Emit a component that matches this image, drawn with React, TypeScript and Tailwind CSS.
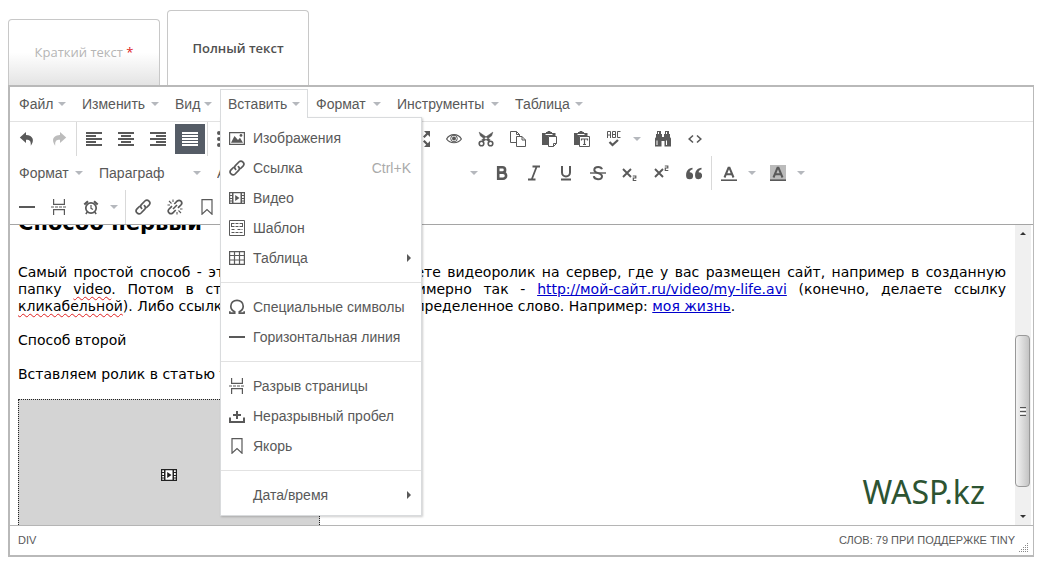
import type { ReactNode } from 'react'

type IconName = keyof typeof icons

const icons = {
  undo: (
    <path d="M7 1 .8 6.500 7 12V8.800c3.600-.2 5.100 1.100 4.800 6 4-5.400 2.400-10.400-4.800-10.800z" fill="currentColor" />
  ),
  redo: (
    <path d="M9 1 15.200 6.500 9 12V8.800c-3.600-.2-5.100 1.100-4.800 6C.2 9.400 1.800 4.400 9 4z" fill="currentColor" />
  ),
  alignLeft: <path d="M0 2h16M0 5h10M0 8h16M0 11h10M0 14h16" strokeWidth="2" />,
  alignCenter: <path d="M0 2h16M3 5h10M0 8h16M3 11h10M0 14h16" strokeWidth="2" />,
  alignRight: <path d="M0 2h16M6 5h10M0 8h16M6 11h10M0 14h16" strokeWidth="2" />,
  alignJustify: <path d="M0 2h16M0 5h16M0 8h16M0 11h16M0 14h16" strokeWidth="2" />,
  bullets: (
    <g fill="currentColor" stroke="none">
      <circle cx="2" cy="2" r="2" />
      <circle cx="2" cy="8" r="2" />
      <circle cx="2" cy="14" r="2" />
      <path d="M6 1h10v2H6zM6 7h10v2H6zM6 13h10v2H6z" />
    </g>
  ),
  fullscreen: (
    <path
      d="M10 0h6v6l-2.200-2.200L10.600 7 9 5.400l3.200-3.200zM6 16H0v-6l2.200 2.200L5.400 9 7 10.600l-3.200 3.200zM16 10v6h-6l2.200-2.200L9 10.600 10.600 9l3.200 3.200zM0 6V0h6L3.800 2.200 7 5.400 5.400 7 2.200 3.800z"
      fill="currentColor"
    />
  ),
  eye: (
    <g>
      <path d="M.6 8C4 2.200 12 2.200 15.400 8 12 13 4 13 .6 8z" strokeWidth="1.200" />
      <circle cx="8" cy="7.500" r="3.300" strokeWidth="1" />
      <circle cx="8" cy="7.500" r="2" fill="currentColor" stroke="none" />
    </g>
  ),
  cut: (
    <g>
      <path d="M1.200 1.200 2.500 5l8.200 5.500 1.500-1.800zM14.800 1.200 13.500 5l-8.200 5.500-1.500-1.800z" fill="currentColor" strokeWidth=".6" />
      <circle cx="3.500" cy="12.500" r="2.300" strokeWidth="1.600" />
      <circle cx="12.500" cy="12.500" r="2.300" strokeWidth="1.600" />
    </g>
  ),
  copy: (
    <g strokeWidth="1">
      <path d="M6.500 11.500h-6V.5h6l3 3v2" />
      <path d="M6.500.5v3h3M6.500 5.500h5.500l3.500 3.500v6.500h-9zM12 5.500V9h3.500" />
    </g>
  ),
  paste: (
    <g>
      <path d="M0 2h4V1h1.500a1.500 1.500 0 0 1 3 0H10v1h3.500v3H6.500v9H0z" fill="currentColor" stroke="none" />
      <path d="M3.500 3.500h7" stroke="#fff" strokeWidth="1" />
      <path d="M6.500 5.500h8v7l-3 3h-5zM11.500 15.500v-3h3" fill="#fff" strokeWidth="1" />
    </g>
  ),
  pasteText: (
    <g>
      <path d="M0 2h4V1h1.500a1.500 1.500 0 0 1 3 0H10v1h3.500v3H5.500v9H0z" fill="currentColor" stroke="none" />
      <path d="M3.500 3.500h7" stroke="#fff" strokeWidth="1" />
      <path d="M5.500 5.500h10v10h-10z" fill="#fff" strokeWidth="1" />
      <path d="M7.500 9.500V8h6v1.500M10.500 8v6M9 13.500h3" strokeWidth="1.200" />
    </g>
  ),
  spellcheck: (
    <g>
      <path d="M1.500 7V.5h3V7M1.500 4h3M6.500.5h3v6h-3zM6.500 3.500h3M14.500.5h-3v6h3" strokeWidth="1" />
      <path d="m3.500 11 3 3L12 9" strokeWidth="2.200" />
    </g>
  ),
  find: (
    <g fill="currentColor" stroke="none">
      <path d="M2 0h4v3H2zM10 0h4v3h-4zM1 3h6v3h2V3h6v3l1 1.500v8H9.500V10h-3v5.500H0v-8L1 6z" />
      <path d="M1.500 9.500h1V14h-1zM11 9.500h1V14h-1zM3 1h1v2H3zM11 1h1v2h-1z" fill="#fff" />
    </g>
  ),
  code: <path d="M6 4.500 2.200 8 6 11.500M10 4.500 13.800 8 10 11.500" strokeWidth="1.600" />,
  bold: <path d="M4.200 2.200h4.200a2.600 2.600 0 0 1 0 5.400H4.200zM4.200 7.600h4.800a3 3 0 0 1 0 6.200H4.200z" strokeWidth="2.600" />,
  italic: <path d="M6.500 1.500H14M2 14.500h7.500M10.700 1.500l-5 13" strokeWidth="1.800" />,
  underline: <path d="M4 1v6.500a4 4 0 0 0 8 0V1M3 14.500h10" strokeWidth="2" />,
  strike: (
    <g>
      <path d="M12 4.300C11.500 2.600 10 2 8.200 2 5.800 2 4.300 3.200 4.300 5c0 4 7.700 2.200 7.700 6.200 0 1.900-1.700 3-4 3-2.200 0-3.900-.9-4.200-3" strokeWidth="2" />
      <path d="M0 8h16" strokeWidth="1.400" />
    </g>
  ),
  sub: (
    <g>
      <path d="m1 4 8 8M9 4l-8 8" strokeWidth="1.900" />
      <path d="M10.800 11h3v2h-2.500v2.500h3" strokeWidth="1.200" />
    </g>
  ),
  sup: (
    <g>
      <path d="m1 4 8 8M9 4l-8 8" strokeWidth="1.900" />
      <path d="M10.800 1h3v2h-2.500v2.500h3" strokeWidth="1.200" />
    </g>
  ),
  quote: (
    <path
      d="M3.600 7.200a3.500 3.500 0 1 1-3.500 3.500C0 6 2.500 3 6.500 2.800v1.800C4.800 4.900 3.800 5.900 3.600 7.200zM12.600 7.200a3.500 3.500 0 1 1-3.500 3.500C9 6 11.500 3 15.500 2.800v1.800c-1.700.3-2.700 1.300-2.900 2.600z"
      fill="currentColor"
      stroke="none"
    />
  ),
  foreColor: (
    <g>
      <path d="M0 15.200h16" strokeWidth="1.600" />
      <path d="m3.500 12.500 4-9.700h1l4 9.700M5 9.200h6" strokeWidth="2" />
    </g>
  ),
  backColor: (
    <g>
      <path d="M0 0h16v16H0z" fill="#bbb" stroke="none" />
      <path d="M0 15.200h16" strokeWidth="1.600" />
      <path d="m3.500 12.500 4-9.700h1l4 9.700M5 9.200h6" strokeWidth="2" />
    </g>
  ),
  hr: <path d="M0 8h16" strokeWidth="2" />,
  pageBreak: (
    <g strokeWidth="1.200">
      <path d="M2.600 0v5.400h10.800V0M2.600 16v-5.400h10.800V16" />
      <path d="M0 8h16" strokeDasharray="3 1" />
    </g>
  ),
  clock: (
    <g>
      <circle cx="8" cy="9" r="5.200" strokeWidth="1.700" />
      <path d="M8 6v3.300l2 1.200" strokeWidth="1.200" />
      <path d="M1.300 5.500 5 2.200M14.700 5.500 11 2.200" strokeWidth="2.200" />
      <path d="m4.300 13-1.500 2M11.700 13l1.500 2" strokeWidth="1.500" />
    </g>
  ),
  link: (
    <g strokeWidth="1.700" strokeLinecap="round">
      <path d="M6.600 9.400a2.900 2.900 0 0 1 0-4.100l3.300-3.300a2.900 2.900 0 0 1 4.100 4.100l-2.400 2.400" />
      <path d="M9.400 6.600a2.900 2.900 0 0 1 0 4.100L6.100 14A2.900 2.900 0 0 1 2 9.900l2.400-2.400" />
    </g>
  ),
  unlink: (
    <g>
      <path d="m7.300 5 3-3a2.700 2.700 0 0 1 3.800 3.800L11 8.900M8.700 11l-3 3a2.700 2.700 0 0 1-3.800-3.800L5 7.100" strokeWidth="1.700" />
      <path d="m6 10 4-4" strokeWidth="1.600" />
      <path d="M2 2l2.500 2.500M6 .5V3M.5 6H3M14 14l-2.500-2.500M10 15.500V13M15.500 10H13" strokeWidth="1.100" />
    </g>
  ),
  bookmark: <path d="M3 .6h10v14.600L8 10.500l-5 4.700z" strokeWidth="1.200" />,
  image: (
    <g>
      <path d="M.6 2.600h14.800v11.800H.6z" strokeWidth="1.200" />
      <path d="M2 12.800 5.500 6l3.500 4 2-2.200 3 5z" fill="currentColor" stroke="none" />
      <circle cx="12" cy="5.400" r="1.400" fill="currentColor" stroke="none" />
    </g>
  ),
  video: (
    <g>
      <path d="M0 2h16v12H0z" fill="currentColor" stroke="none" />
      <path d="M4.500 3.200h7v9.600h-7zM1.200 3.200H3V5H1.200zM1.200 6.100H3v1.800H1.200zM1.200 9H3v1.500H1.200zM1.200 11.500H3v1.300H1.200zM13 3.200h1.800V5H13zM13 6.100h1.800v1.800H13zM13 9h1.800v1.500H13zM13 11.500h1.800v1.300H13z" fill="#fff" stroke="none" />
      <path d="M6.200 5v6l4.300-3z" fill="currentColor" stroke="none" />
    </g>
  ),
  template: (
    <g strokeWidth="1">
      <path d="M.5.5h15v15H.5z" />
      <path d="M2.500 3.500h11M2.500 6.500h11M2.500 9.500h4M8.500 9.500h5M2.500 12.500h11" strokeDasharray="3 1" />
      <path d="M2.500 3v4M13.500 3v4" />
    </g>
  ),
  table: <path d="M.6 1.600h14.800v12.800H.6zM.6 5.500h14.800M.6 10h14.800M5.500 1.600v12.800M10.500 1.600v12.800" strokeWidth="1.200" />,
  omega: (
    <path d="M.5 14.200h5.200v-1.500C3.300 11.600 1.800 9.700 1.800 7.200 1.800 3.800 4.500 1.300 8 1.300s6.200 2.500 6.200 5.900c0 2.500-1.500 4.400-3.900 5.500v1.500h5.200M.8 14.800v-2.500M15.200 14.800v-2.500" strokeWidth="1.700" />
  ),
  nbsp: <path d="M1 9.500V14h14V9.500M8 3v8M4 7h8" strokeWidth="2" />,
}

function Icon({ name, className = '' }: { name: IconName; className?: string }) {
  return (
    <svg
      viewBox="0 0 16 16"
      width="16"
      height="16"
      fill="none"
      stroke={name === 'undo' || name === 'redo' || name === 'fullscreen' ? 'none' : 'currentColor'}
      className={`shrink-0 ${className}`}
      aria-hidden="true"
    >
      {icons[name]}
    </svg>
  )
}

function Caret() {
  return <span className="h-0 w-0 shrink-0 border-x-4 border-t-4 border-x-transparent border-t-[#b5b8bd]" />
}

type ToolProps = { icon: IconName; label: string; active?: boolean; faded?: boolean }

function Tool({ icon, label, active, faded }: ToolProps) {
  return (
    <button
      type="button"
      aria-label={label}
      aria-pressed={active}
      disabled={faded}
      className={`mx-px grid h-[30px] w-[30px] place-content-center ${active ? 'bg-[#555c66] text-white' : ''} ${faded ? 'opacity-40' : ''}`}
    >
      <Icon name={icon} />
    </button>
  )
}

function SplitTool({ icon, label }: ToolProps) {
  return (
    <button type="button" aria-label={label} aria-haspopup="menu" className="flex h-[30px] w-[49px] items-center gap-[11px] pl-2">
      <Icon name={icon} />
      <Caret />
    </button>
  )
}

function Group({ first, children }: { first?: boolean; children: ReactNode }) {
  return (
    <div className={`flex h-[34px] items-center px-px ${first ? '' : 'border-l border-[#d9d9d9]'}`}>
      {children}
    </div>
  )
}

function Picker({ label, value, width }: { label: string; value: string; width: string }) {
  return (
    <label className={`flex h-[30px] items-center px-2 ${width}`}>
      <select aria-label={label} className="min-w-0 grow appearance-none bg-transparent outline-none">
        <option>{value}</option>
      </select>
      <Caret />
    </label>
  )
}

type InsertItem = { icon?: IconName; label: string; shortcut?: string; submenu?: boolean }

const insertGroups: InsertItem[][] = [
  [
    { icon: 'image', label: 'Изображения' },
    { icon: 'link', label: 'Ссылка', shortcut: 'Ctrl+K' },
    { icon: 'video', label: 'Видео' },
    { icon: 'template', label: 'Шаблон' },
    { icon: 'table', label: 'Таблица', submenu: true },
  ],
  [
    { icon: 'omega', label: 'Специальные символы' },
    { icon: 'hr', label: 'Горизонтальная линия' },
  ],
  [
    { icon: 'pageBreak', label: 'Разрыв страницы' },
    { icon: 'nbsp', label: 'Неразрывный пробел' },
    { icon: 'bookmark', label: 'Якорь' },
  ],
  [{ label: 'Дата/время', submenu: true }],
]

function InsertMenu() {
  return (
    <div
      role="menu"
      className="absolute -left-px top-7 z-10 w-[202px] border border-[#d9dbdd] bg-white py-[5px] shadow-[1px_1px_2px_rgba(0,0,0,0.2)]"
    >
      {insertGroups.map((group, i) => (
        <div key={i} className={i > 0 ? 'mt-[9px] border-t border-[#e2e2e2] pt-[9px]' : ''}>
          {group.map((item) => (
            <button
              key={item.label}
              type="button"
              role="menuitem"
              className="flex h-[30px] w-full items-center gap-2 pl-2 pr-[10px] text-left whitespace-nowrap"
            >
              {item.icon ? <Icon name={item.icon} /> : <span className="w-4" />}
              <span className="grow">{item.label}</span>
              {item.shortcut && <span className="text-[#aaa]">{item.shortcut}</span>}
              {item.submenu && <span className="h-0 w-0 border-y-4 border-l-4 border-y-transparent border-l-[#595959]" />}
            </button>
          ))}
        </div>
      ))}
    </div>
  )
}

const menus = [
  { label: 'Файл', width: 'w-[63px]' },
  { label: 'Изменить', width: 'w-[93px]' },
  { label: 'Вид', width: 'w-[53px]' },
  { label: 'Вставить', width: 'w-[88px]' },
  { label: 'Формат', width: 'w-[81px]' },
  { label: 'Инструменты', width: 'w-[118px]' },
  { label: 'Таблица', width: 'w-[84px]' },
]

function MenuBar() {
  return (
    <nav className="flex h-[35px] items-start border-b border-[#e2e2e2] pl-px pt-[2px]">
      {menus.map(({ label, width }) => {
        const open = label === 'Вставить'
        return (
          <div key={label} className={`relative border-x ${width} ${open ? 'border-[#d9dbdd]' : 'border-transparent'}`}>
            <button
              type="button"
              aria-haspopup="menu"
              aria-expanded={open}
              className={`relative flex h-[29px] w-full items-center justify-between border-t bg-white px-[7px] ${open ? 'z-20 border-[#d9dbdd]' : 'border-transparent'}`}
            >
              {label}
              <Caret />
            </button>
            {open && <InsertMenu />}
          </div>
        )
      })}
    </nav>
  )
}

function Toolbars() {
  return (
    <div>
      <div className="flex">
        <Group first>
          <Tool icon="undo" label="Отменить" />
          <Tool icon="redo" label="Вернуть" faded />
        </Group>
        <Group>
          <Tool icon="alignLeft" label="По левому краю" />
          <Tool icon="alignCenter" label="По центру" />
          <Tool icon="alignRight" label="По правому краю" />
          <Tool icon="alignJustify" label="По ширине" active />
        </Group>
        <Group>
          <SplitTool icon="bullets" label="Маркированный список" />
          <SplitTool icon="bullets" label="Нумерованный список" />
          <Tool icon="alignRight" label="Уменьшить отступ" />
          <Tool icon="alignLeft" label="Увеличить отступ" />
        </Group>
        <Group>
          <Tool icon="table" label="Показать блоки" />
          <Tool icon="fullscreen" label="Полноэкранный режим" />
          <Tool icon="eye" label="Предпросмотр" />
          <Tool icon="cut" label="Вырезать" />
          <Tool icon="copy" label="Копировать" />
          <Tool icon="paste" label="Вставить" />
          <Tool icon="pasteText" label="Вставить как текст" />
          <SplitTool icon="spellcheck" label="Проверка правописания" />
          <Tool icon="find" label="Найти и заменить" />
          <Tool icon="code" label="Исходный код" />
        </Group>
      </div>
      <div className="flex">
        <Group first>
          <button type="button" aria-haspopup="menu" className="flex h-[30px] w-20 items-center justify-between px-2">
            Формат
            <Caret />
          </button>
          <Picker label="Блок" value="Параграф" width="w-[118px]" />
          <Picker label="Шрифт" value="Arial" width="w-[140px]" />
          <Picker label="Размер шрифта" value="10pt" width="w-[137px]" />
          <Tool icon="bold" label="Полужирный" />
          <Tool icon="italic" label="Курсив" />
          <Tool icon="underline" label="Подчеркнутый" />
          <Tool icon="strike" label="Зачеркнутый" />
          <Tool icon="sub" label="Нижний индекс" />
          <Tool icon="sup" label="Верхний индекс" />
          <Tool icon="quote" label="Цитата" />
        </Group>
        <Group>
          <SplitTool icon="foreColor" label="Цвет текста" />
          <SplitTool icon="backColor" label="Цвет фона" />
        </Group>
      </div>
      <div className="flex">
        <Group first>
          <Tool icon="hr" label="Горизонтальная линия" />
          <Tool icon="pageBreak" label="Разрыв страницы" />
          <SplitTool icon="clock" label="Дата и время" />
        </Group>
        <Group>
          <Tool icon="link" label="Ссылка" />
          <Tool icon="unlink" label="Убрать ссылку" />
          <Tool icon="bookmark" label="Якорь" />
        </Group>
      </div>
    </div>
  )
}

function Misspelled({ children }: { children: ReactNode }) {
  return <span className="underline decoration-[#e02020] decoration-wavy decoration-1 underline-offset-2">{children}</span>
}

function ScrollBar() {
  return (
    <div className="mr-[2px] flex w-4 shrink-0 flex-col bg-[#f0f0f0]" aria-hidden="true">
      <span className="mt-[7px] h-0 w-0 self-center border-x-[3px] border-b-[3px] border-x-transparent border-b-[#333]" />
      <span className="mt-[100px] flex h-[152px] w-[15px] flex-col items-center justify-center gap-px rounded-sm border border-[#999] bg-gradient-to-r from-[#f4f4f4] to-[#c4c4c4]">
        <i className="h-px w-[6px] bg-[#555]" />
        <i className="h-px w-[6px] bg-white" />
        <i className="h-px w-[6px] bg-[#555]" />
        <i className="h-px w-[6px] bg-white" />
        <i className="h-px w-[6px] bg-[#555]" />
      </span>
      <span className="mt-auto mb-[7px] h-0 w-0 self-center border-x-[3px] border-t-[3px] border-x-transparent border-t-[#333]" />
    </div>
  )
}

function Content() {
  return (
    <div className="relative box-content flex h-[300px] overflow-hidden border-t border-[#a5a5a5]">
      <article className="min-w-0 grow pl-2 pr-[9px] font-['DejaVu_Sans',sans-serif] text-[14px] leading-[17px] text-black">
        <h2 className="-mt-[14px] mb-[29px] text-[21px] leading-6 font-bold">Способ первый</h2>
        <p className="mb-[17px] text-justify">
          Самый простой способ - это если вы сами закачиваете видеоролик на сервер, где у вас размещен сайт, например в
          созданную папку <Misspelled>video</Misspelled>. Потом в статье пишете ссылку примерно так -{' '}
          <a href="#avi" className="text-[#0000cc] underline">http://мой-сайт.ru/video/my-life.avi</a> (конечно, делаете
          ссылку <Misspelled>кликабельной</Misspelled>). Либо ссылку поставите на какое-то определенное слово. Например:{' '}
          <a href="#life" className="text-[#0000cc] underline">моя жизнь</a>.
        </p>
        <p className="mb-[17px]">Способ второй</p>
        <p className="mb-4">Вставляем ролик в статью так:</p>
        <div className="grid h-[152px] w-[302px] place-content-center border border-dotted border-[#222] bg-[#d4d4d4] text-[#222]">
          <Icon name="video" />
        </div>
      </article>
      <ScrollBar />
      <span className="absolute right-12 bottom-[13px] font-['Noto_Sans',sans-serif] text-[32px] leading-10 text-[#2d5432]">
        WASP.kz
      </span>
    </div>
  )
}

function StatusBar() {
  return (
    <footer className="flex h-[30px] items-center justify-between border-t border-[#b5b5b5] pr-1 pl-2 text-[11px]">
      <span>DIV</span>
      <span className="flex h-full items-center gap-1">
        СЛОВ: 79 ПРИ ПОДДЕРЖКЕ TINY
        <svg width="10" height="10" viewBox="0 0 10 10" fill="#888" className="mb-[2px] self-end" aria-hidden="true">
          <path d="M8 0h1v1H8zM6 2h1v1H6zM8 2h1v1H8zM4 4h1v1H4zM6 4h1v1H6zM8 4h1v1H8zM2 6h1v1H2zM4 6h1v1H4zM6 6h1v1H6zM8 6h1v1H8zM0 8h1v1H0zM2 8h1v1H2zM4 8h1v1H4zM6 8h1v1H6zM8 8h1v1H8z" />
        </svg>
      </span>
    </footer>
  )
}

export default function App() {
  return (
    <main className="bg-white pt-[10px] pr-3 pb-2 pl-2 font-['Liberation_Sans',Arial,sans-serif] text-[14px] text-[#595959]">
      <div role="tablist" className="flex items-end gap-[7px] font-['Open_Sans',sans-serif] text-[13px]">
        <button
          type="button"
          role="tab"
          aria-selected="false"
          className="h-[66px] w-[152px] rounded-t border border-b-0 border-[#c8c8c8] bg-gradient-to-b from-white from-50% to-[#e4e4e4] pt-px font-medium text-[#b5b5b5]"
        >
          Краткий текст <span className="text-[#d22]">*</span>
        </button>
        <button
          type="button"
          role="tab"
          aria-selected="true"
          className="h-[75px] w-[142px] rounded-t border border-b-0 border-[#c8c8c8] bg-white pt-[2px] font-semibold text-[#505050]"
        >
          Полный текст
        </button>
      </div>
      <section className="border-2 border-r border-[#b9b9b9]">
        <MenuBar />
        <Toolbars />
        <Content />
        <StatusBar />
      </section>
    </main>
  )
}
